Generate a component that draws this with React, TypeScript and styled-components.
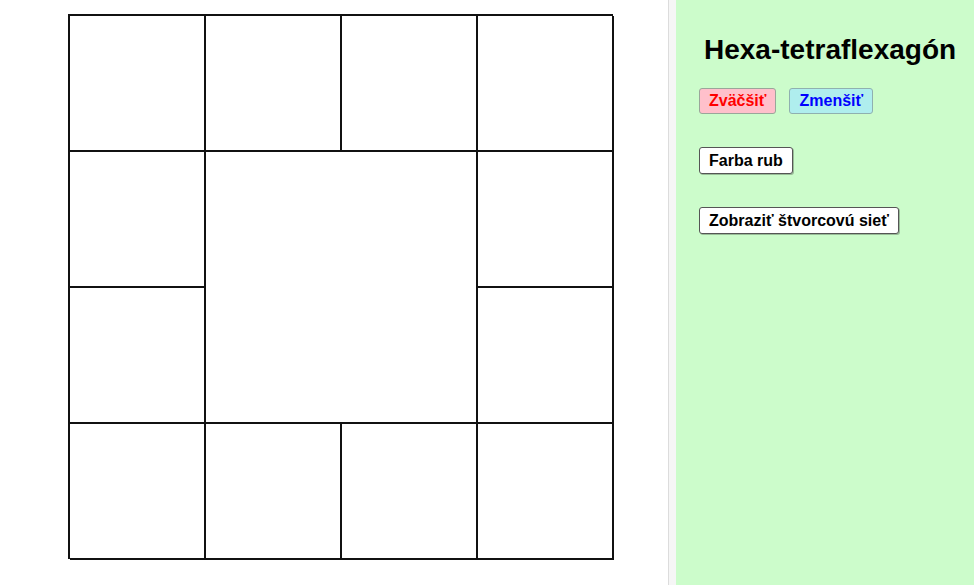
import styled, { createGlobalStyle } from 'styled-components';

const Global = createGlobalStyle`
  html, body { margin: 0; padding: 0; background: #ffffff; }
  body { font-family: "Liberation Sans", Arial, sans-serif; }
`;

const Page = styled.div`
  display: flex;
  width: 974px;
  height: 587px;
  overflow: hidden;
`;

const Canvas = styled.div`
  width: 668px;
  height: 587px;
  padding: 14px 0 0 68px;
  box-sizing: border-box;
  background: #ffffff;
`;

const Net = styled.div`
  display: grid;
  grid-template-columns: 136px 136px 136px 136px;
  grid-template-rows: 136px 136px 136px 136px;
  width: 545px;
  height: 545px;
  border-top: 2px solid #111;
  border-left: 2px solid #111;
  box-sizing: border-box;
`;

const Cell = styled.div<{ $span?: boolean }>`
  border-right: 2px solid #111;
  border-bottom: 2px solid #111;
  ${(p) => (p.$span ? 'grid-column: 2 / span 2; grid-row: 2 / span 2;' : '')}
`;

const Divider = styled.div`
  width: 8px;
  height: 585px;
  border-left: 1px solid #dcdcdc;
  background: #f6f6f6;
  box-sizing: border-box;
`;

const Panel = styled.div`
  flex: 1;
  height: 585px;
  background: #ccfccb;
  padding: 33px 0 0 23px;
  box-sizing: border-box;
  display: flex;
  flex-direction: column;
  align-items: flex-start;
`;

const Title = styled.h1`
  margin: 0 0 22px 5px;
  font-size: 28px;
  font-weight: bold;
  color: #000;
  line-height: 33px;
`;

const Row = styled.div`
  display: flex;
  gap: 13px;
  margin-bottom: 33px;
`;

const Btn = styled.button<{ $bg: string; $fg: string; $bd: string }>`
  height: 26px;
  padding: 0 9px;
  font-family: "Liberation Sans", Arial, sans-serif;
  font-size: 16px;
  font-weight: bold;
  background: ${(p) => p.$bg};
  color: ${(p) => p.$fg};
  border: 1px solid ${(p) => p.$bd};
  border-radius: 3px;
  box-sizing: border-box;
  line-height: 22px;
`;

const Plain = styled(Btn)`
  height: 27px;
  border-width: 1.5px;
  box-shadow: 1px 1px 0 rgba(0, 0, 0, 0.25);
`;

const cells = Array.from({ length: 4 });

export default function App() {
  return (
    <>
      <Global />
      <Page>
        <Canvas>
          <Net>
            {cells.map((_, i) => <Cell key={'a' + i} />)}
            <Cell />
            <Cell $span />
            <Cell />
            <Cell />
            <Cell />
            {cells.map((_, i) => <Cell key={'b' + i} />)}
          </Net>
        </Canvas>
        <Divider />
        <Panel>
          <Title>Hexa-tetraflexagón</Title>
          <Row>
            <Btn $bg="#ffc0cb" $fg="#ff0000" $bd="#9aa69a">Zväčšiť</Btn>
            <Btn $bg="#afeeee" $fg="#0000ff" $bd="#8fb0b0">Zmenšiť</Btn>
          </Row>
          <Row>
            <Plain $bg="#ffffff" $fg="#000" $bd="#555">Farba rub</Plain>
          </Row>
          <Row>
            <Plain $bg="#ffffff" $fg="#000" $bd="#555">Zobraziť štvorcovú sieť</Plain>
          </Row>
        </Panel>
      </Page>
    </>
  );
}
